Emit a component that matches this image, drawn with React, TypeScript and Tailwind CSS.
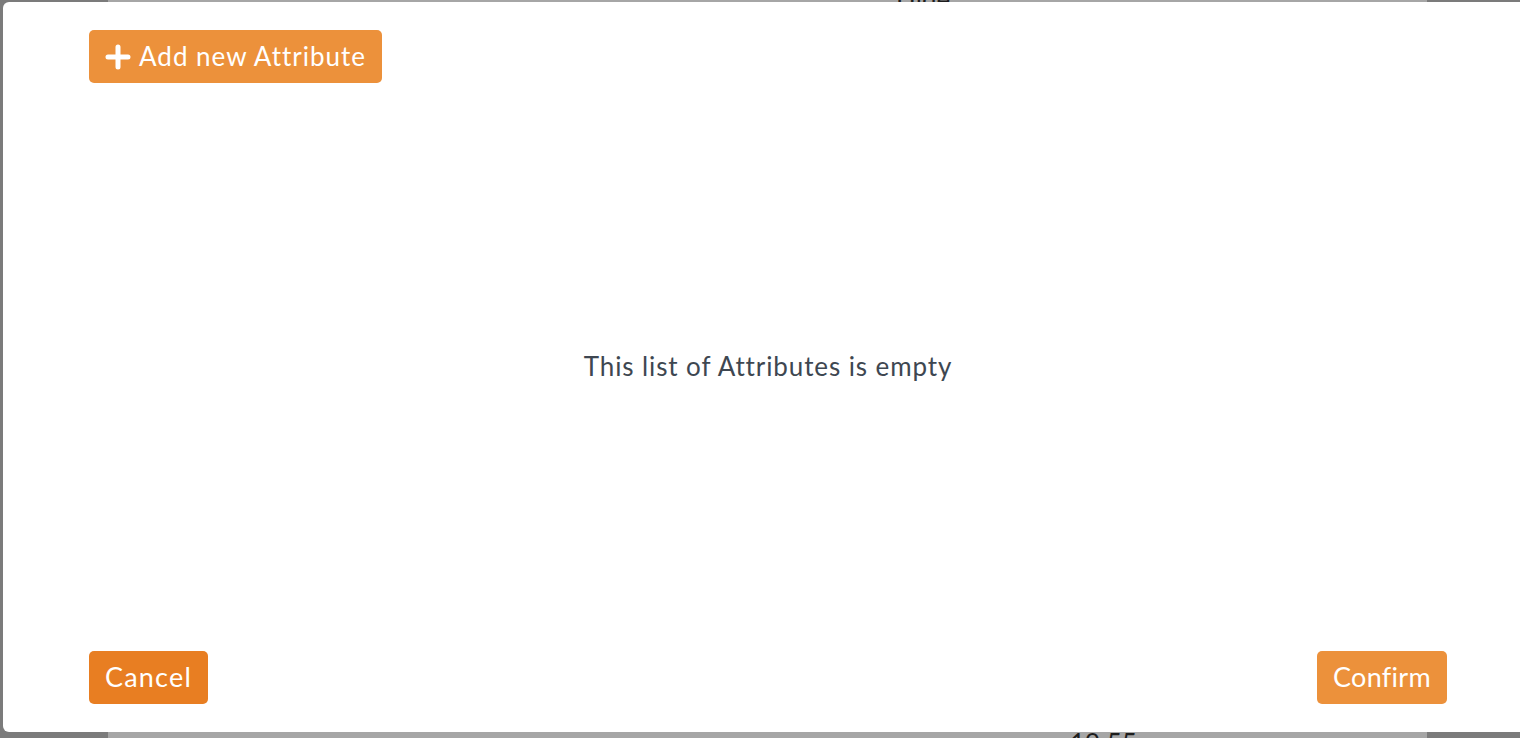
import React from 'react';

const PlusIcon = () => (
  <svg width="26" height="26" viewBox="0 0 26 26" className="shrink-0">
    <path d="M13 3v20M3 13h20" stroke="white" strokeWidth="5" strokeLinecap="round" />
  </svg>
);

export default function App() {
  return (
    <div className="relative h-[738px] w-full overflow-hidden font-['Lato',sans-serif]">
      {/* page behind the dimmed overlay */}
      <div className="flex h-full w-full">
        <div className="w-[108px] bg-[#7b7b7b]" />
        <div className="relative flex-1 bg-[#a6a6a6]">
          <span className="absolute left-[788px] top-[-20px] text-[26px] text-[#1d1d1d]">Hide</span>
          <span className="absolute left-[962px] top-[724px] text-[26px] text-[#1d1d1d]">19:55</span>
        </div>
        <div className="w-[93px] bg-[#7b7b7b]" />
      </div>

      {/* modal */}
      <div className="absolute left-[3px] top-[2px] bottom-[6px] w-[1530px] rounded-[6px] bg-white flex flex-col px-[86px] pt-[28px] pb-[28px]">
        <div className="flex">
          <button
            type="button"
            className="h-[53px] flex items-center gap-[8px] pl-[16px] pr-[16px] rounded-[5px] bg-[#ec913b] text-white text-[26px] tracking-[1px]"
          >
            <PlusIcon />
            <span>Add new Attribute</span>
          </button>
        </div>

        <div className="flex-1 flex items-center justify-center">
          <p className="text-[26px] tracking-[0.9px] text-[#3e4751] -mt-[2px]">This list of Attributes is empty</p>
        </div>

        <div className="flex items-center justify-between">
          <button type="button" className="h-[53px] px-[16px] rounded-[5px] bg-[#e87e22] text-white text-[27px] tracking-[1.2px]">
            Cancel
          </button>
          <button type="button" className="h-[53px] px-[16px] rounded-[5px] bg-[#ec913b] text-white text-[27px] tracking-[0.3px]">
            Confirm
          </button>
        </div>
      </div>
    </div>
  );
}
